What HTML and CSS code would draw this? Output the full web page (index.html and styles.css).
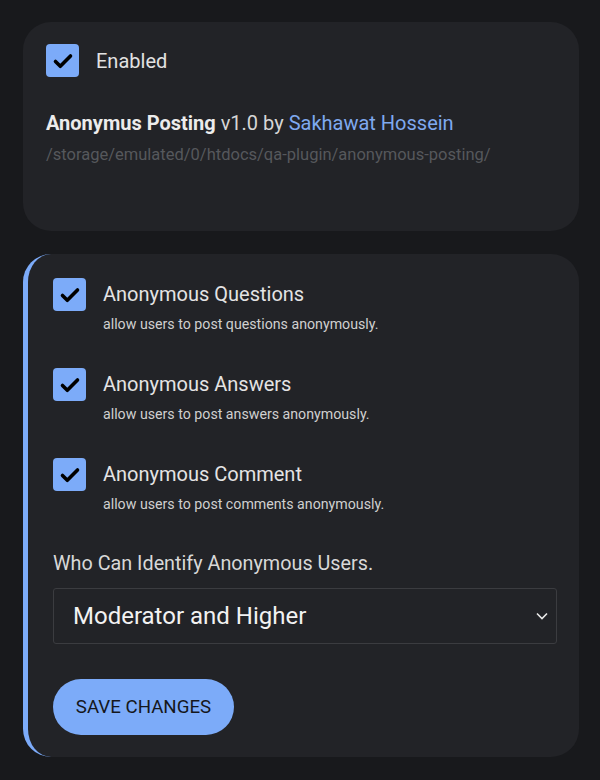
FILE: index.html
```html
<!DOCTYPE html>
<html>
<head>
<meta charset="utf-8">
<link rel="stylesheet" href="styles.css">
</head>
<body>
<div class="page">
  <section class="card info">
    <label class="check-row">
      <span class="box"><svg viewBox="0 0 24 24" width="24" height="24"><path d="M4.5 12.5l4.8 4.8L19.5 7" fill="none" stroke="#000" stroke-width="3.6" stroke-linecap="round" stroke-linejoin="round"/></svg></span>
      <span class="enabled">Enabled</span>
    </label>
    <div class="title"><strong>Anonymus Posting</strong> v1.0 by <a class="author">Sakhawat Hossein</a></div>
    <div class="path">/storage/emulated/0/htdocs/qa-plugin/anonymous-posting/</div>
  </section>

  <section class="card settings">
    <div class="opt">
      <span class="box"><svg viewBox="0 0 24 24" width="24" height="24"><path d="M4.5 12.5l4.8 4.8L19.5 7" fill="none" stroke="#000" stroke-width="3.6" stroke-linecap="round" stroke-linejoin="round"/></svg></span>
      <div class="opt-text">
        <div class="opt-label">Anonymous Questions</div>
        <div class="opt-desc">allow users to post questions anonymously.</div>
      </div>
    </div>
    <div class="opt">
      <span class="box"><svg viewBox="0 0 24 24" width="24" height="24"><path d="M4.5 12.5l4.8 4.8L19.5 7" fill="none" stroke="#000" stroke-width="3.6" stroke-linecap="round" stroke-linejoin="round"/></svg></span>
      <div class="opt-text">
        <div class="opt-label">Anonymous Answers</div>
        <div class="opt-desc">allow users to post answers anonymously.</div>
      </div>
    </div>
    <div class="opt">
      <span class="box"><svg viewBox="0 0 24 24" width="24" height="24"><path d="M4.5 12.5l4.8 4.8L19.5 7" fill="none" stroke="#000" stroke-width="3.6" stroke-linecap="round" stroke-linejoin="round"/></svg></span>
      <div class="opt-text">
        <div class="opt-label">Anonymous Comment</div>
        <div class="opt-desc">allow users to post comments anonymously.</div>
      </div>
    </div>

    <div class="who">Who Can Identify Anonymous Users.</div>
    <div class="select">
      <span>Moderator and Higher</span>
      <svg viewBox="0 0 12 8" width="12" height="8"><path d="M1 1.5l5 5 5-5" fill="none" stroke="#e8e8e8" stroke-width="1.6"/></svg>
    </div>
    <button class="save">SAVE CHANGES</button>
  </section>
</div>
</body>
</html>
```
FILE: styles.css
```css
* { box-sizing: border-box; }
html, body { margin: 0; padding: 0; }
body {
  background: #18191c;
  font-family: Roboto, "Noto Sans", sans-serif;
  color: #e3e3e3;
  width: 600px;
  height: 780px;
  overflow: hidden;
}
.page {
  padding: 22px 21px 0 23px;
  display: flex;
  flex-direction: column;
  gap: 23px;
}
.card {
  background: #222327;
  border-radius: 28px;
}
.info {
  height: 209px;
  padding: 22px 23px 0 23px;
}
.check-row {
  display: flex;
  align-items: center;
  gap: 17px;
}
.box {
  width: 33px;
  height: 33px;
  border-radius: 4px;
  background: #7cabf9;
  display: flex;
  align-items: center;
  justify-content: center;
  flex: none;
}
.enabled {
  font-size: 20px;
  color: #e2e2e2;
}
.title {
  margin-top: 34px;
  font-size: 20px;
  color: #d6d6d6;
  line-height: 24px;
  white-space: nowrap;
}
.title strong { color: #ececec; font-weight: 700; }
.author { color: #7fa9ef; }
.path {
  margin-top: 10px;
  font-size: 16.5px;
  color: #56585c;
  line-height: 20px;
  white-space: nowrap;
}
.settings {
  height: 503px;
  border-left: 5px solid #7cabf9;
  padding: 24px 22px 0 25px;
  display: flex;
  flex-direction: column;
}
.opt {
  display: flex;
  gap: 17px;
  height: 90px;
  flex: none;
}
.opt-text { padding-top: 5px; }
.opt-label {
  font-size: 20px;
  color: #e4e4e4;
  line-height: 22px;
}
.opt-desc {
  font-size: 14.2px;
  line-height: 16px;
  color: #d0d0d0;
  margin-top: 11px;
}
.who {
  margin-top: 4px;
  font-size: 19.8px;
  color: #d8d8d8;
  line-height: 24px;
}
.select {
  margin-top: 12px;
  height: 56px;
  flex: none;
  border: 1px solid #3b3c40;
  border-radius: 3px;
  display: flex;
  align-items: center;
  justify-content: space-between;
  padding: 0 8px 0 19px;
  font-size: 24px;
  color: #f2f2f2;
}
.save {
  margin-top: 35px;
  width: 181px;
  height: 56px;
  flex: none;
  border: none;
  border-radius: 28px;
  background: #7cabf9;
  color: #15171c;
  font-family: Roboto, sans-serif;
  font-size: 18.7px;
  padding: 0;
}
```
